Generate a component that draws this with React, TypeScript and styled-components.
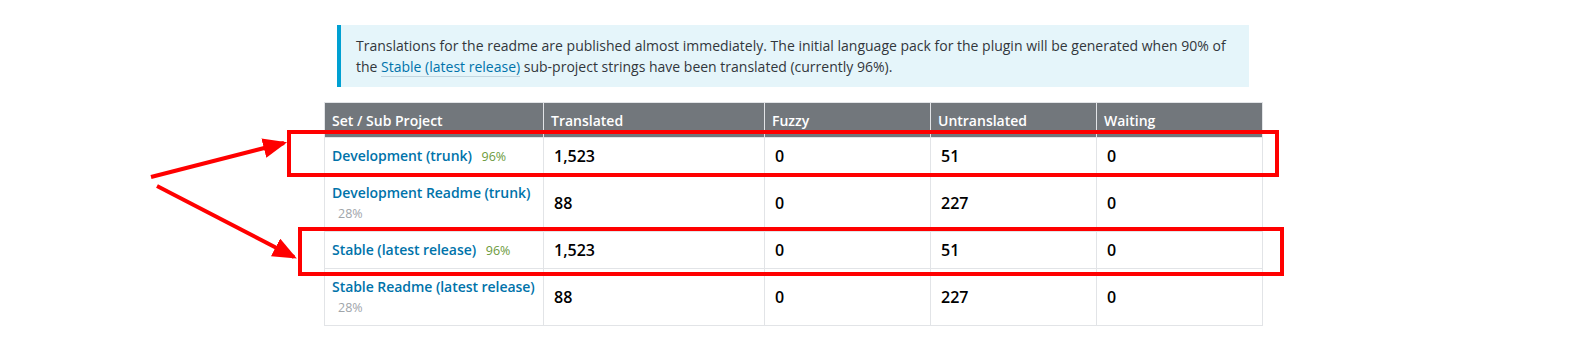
import styled, { createGlobalStyle } from 'styled-components'

const GlobalStyle = createGlobalStyle`
  body {
    margin: 0;
    background: #fff;
    font-family: 'Open Sans', 'Noto Sans', sans-serif;
    color: #32373c;
  }
`

type SubProject = {
  name: string
  percent: number
  translated: string
  fuzzy: number
  untranslated: number
  waiting: number
}

const subProjects: SubProject[] = [
  { name: 'Development (trunk)', percent: 96, translated: '1,523', fuzzy: 0, untranslated: 51, waiting: 0 },
  { name: 'Development Readme (trunk)', percent: 28, translated: '88', fuzzy: 0, untranslated: 227, waiting: 0 },
  { name: 'Stable (latest release)', percent: 96, translated: '1,523', fuzzy: 0, untranslated: 51, waiting: 0 },
  { name: 'Stable Readme (latest release)', percent: 28, translated: '88', fuzzy: 0, untranslated: 227, waiting: 0 },
]

export default function App() {
  return (
    <>
      <GlobalStyle />
      <Page>
        <Content>
          <Notice>
            Translations for the readme are published almost immediately. The initial language pack for the
            plugin will be generated when 90% of the <NoticeLink href="#">Stable (latest release)</NoticeLink>{' '}
            sub-project strings have been translated (currently 96%).
          </Notice>
          <Table>
            <colgroup>
              <col style={{ width: 219 }} />
              <col style={{ width: 221 }} />
              <col style={{ width: 166 }} />
              <col style={{ width: 166 }} />
              <col style={{ width: 166 }} />
            </colgroup>
            <thead>
              <tr>
                <Th>Set / Sub Project</Th>
                <Th>Translated</Th>
                <Th>Fuzzy</Th>
                <Th>Untranslated</Th>
                <Th>Waiting</Th>
              </tr>
            </thead>
            <tbody>
              {subProjects.map((p) => (
                <tr key={p.name}>
                  <NameCell>
                    <ProjectLink href="#">{p.name}</ProjectLink> <Percent $done={p.percent >= 90}>{p.percent}%</Percent>
                  </NameCell>
                  <NumCell>{p.translated}</NumCell>
                  <NumCell>{p.fuzzy}</NumCell>
                  <NumCell>{p.untranslated}</NumCell>
                  <NumCell>{p.waiting}</NumCell>
                </tr>
              ))}
            </tbody>
          </Table>
        </Content>
        <Annotations width="1585" height="347" viewBox="0 0 1585 347">
          <defs>
            <marker id="head" markerWidth="6" markerHeight="5" refX="5.2" refY="2.5" orient="auto" markerUnits="strokeWidth">
              <path d="M0,0 L6,2.5 L0,5 Z" fill="#ff0000" />
            </marker>
          </defs>
          <rect x="289" y="132" width="988" height="43" fill="none" stroke="#ff0000" strokeWidth="4" />
          <rect x="300" y="229" width="982" height="45" fill="none" stroke="#ff0000" strokeWidth="4" />
          <line x1="151" y1="177" x2="284" y2="143" stroke="#ff0000" strokeWidth="4" markerEnd="url(#head)" />
          <line x1="157" y1="186" x2="294" y2="257" stroke="#ff0000" strokeWidth="4" markerEnd="url(#head)" />
        </Annotations>
      </Page>
    </>
  )
}

const Page = styled.div`
  position: relative;
  width: 1585px;
  height: 347px;
  overflow: hidden;
`

const Content = styled.div`
  width: 939px;
  margin-left: 324px;
  padding-top: 25px;
`

const Notice = styled.div`
  margin: 0 14px 0 13px;
  padding: 10px 4px 10px 15px;
  border-left: 4px solid #00a0d2;
  background: #e5f5fa;
  font-size: 14px;
  line-height: 21px;
  color: #32373c;
`

const NoticeLink = styled.a`
  color: #0073aa;
  text-decoration: none;
  border-bottom: 1px solid #c3d6df;
`

const Table = styled.table`
  margin-top: 15px;
  width: 939px;
  table-layout: fixed;
  border-collapse: collapse;
  border: 1px solid #e2e4e7;
`

const Th = styled.th`
  height: 35px;
  padding: 0 7px;
  box-sizing: border-box;
  background: #72777c;
  color: #fff;
  font-size: 14px;
  font-weight: 600;
  text-align: left;
  vertical-align: middle;
  border-left: 1px solid #e2e4e7;
  &:first-child {
    border-left: none;
  }
`

const NameCell = styled.td`
  padding: 8px 2px 8px 7px;
  font-size: 14px;
  line-height: 20px;
  border: 1px solid #e2e4e7;
  vertical-align: middle;
`

const ProjectLink = styled.a`
  color: #0073aa;
  font-weight: 600;
  white-space: nowrap;
  letter-spacing: -0.05px;
  text-decoration: none;
`

const Percent = styled.span<{ $done: boolean }>`
  margin-left: 4px;
  padding-left: 2px;
  font-size: 12.5px;
  line-height: 1;
  color: ${(p) => (p.$done ? '#6c9a3c' : '#a0a5aa')};
`

const NumCell = styled.td`
  padding: 8px 10px;
  font-size: 16px;
  font-weight: 600;
  line-height: 20px;
  color: #000;
  border: 1px solid #e2e4e7;
  vertical-align: middle;
`

const Annotations = styled.svg`
  position: absolute;
  left: 0;
  top: 0;
  pointer-events: none;
`
